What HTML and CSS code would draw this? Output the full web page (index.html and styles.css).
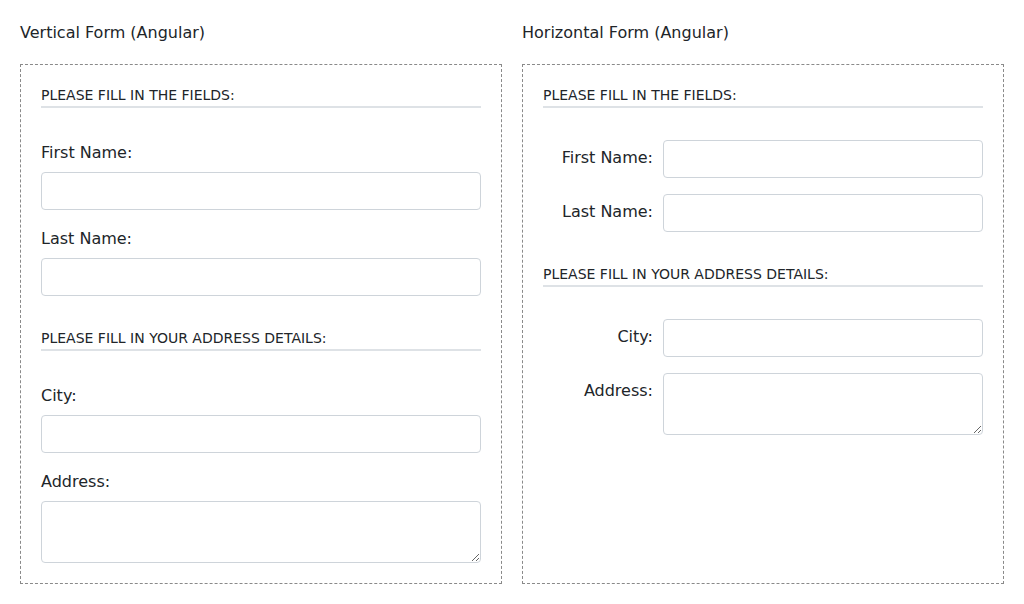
FILE: index.html
```html
<!DOCTYPE html>
<html lang="en">
<head>
<meta charset="utf-8">
<title>Forms</title>
<link rel="stylesheet" href="styles.css">
</head>
<body>
<div class="page">
  <div class="column">
    <h2 class="title">Vertical Form (Angular)</h2>
    <div class="panel">
      <div class="section">
        <div class="legend">PLEASE FILL IN THE FIELDS:</div>
        <div class="group">
          <label class="label">First Name:</label>
          <input class="control" type="text">
        </div>
        <div class="group">
          <label class="label">Last Name:</label>
          <input class="control" type="text">
        </div>
      </div>
      <div class="section">
        <div class="legend">PLEASE FILL IN YOUR ADDRESS DETAILS:</div>
        <div class="group">
          <label class="label">City:</label>
          <input class="control" type="text">
        </div>
        <div class="group">
          <label class="label">Address:</label>
          <textarea class="control area"></textarea>
        </div>
      </div>
    </div>
  </div>
  <div class="column">
    <h2 class="title">Horizontal Form (Angular)</h2>
    <div class="panel">
      <div class="section">
        <div class="legend">PLEASE FILL IN THE FIELDS:</div>
        <div class="group row">
          <label class="label hlabel">First Name:</label>
          <input class="control" type="text">
        </div>
        <div class="group row">
          <label class="label hlabel">Last Name:</label>
          <input class="control" type="text">
        </div>
      </div>
      <div class="section">
        <div class="legend">PLEASE FILL IN YOUR ADDRESS DETAILS:</div>
        <div class="group row">
          <label class="label hlabel">City:</label>
          <input class="control" type="text">
        </div>
        <div class="group row">
          <label class="label hlabel">Address:</label>
          <textarea class="control area"></textarea>
        </div>
      </div>
    </div>
  </div>
</div>
</body>
</html>
```

FILE: styles.css
```css
* { box-sizing: border-box; }
html, body { margin: 0; padding: 0; background: #fff; }
body {
  font-family: "DejaVu Sans", sans-serif;
  color: #212529;
  font-size: 16px;
  line-height: 1.5;
}
.page {
  display: grid;
  grid-template-columns: 1fr 1fr;
  column-gap: 20px;
  padding: 20px;
}
.column { display: flex; flex-direction: column; }
.title {
  margin: 0 0 19px 0;
  padding-top: 1px;
  font-size: 16px;
  font-weight: normal;
  line-height: 24px;
}
.panel {
  flex: 1;
  border: 1px dashed #8a8a8a;
  padding: 20px;
}
.section { margin-bottom: 32px; }
.section:last-child { margin-bottom: 0; }
.legend {
  font-size: 14px;
  line-height: 21px;
  border-bottom: 2px solid #dee2e6;
  margin-bottom: 32px;
}
.group { margin-bottom: 16px; display: flex; flex-direction: column; }
.section:last-child .group:last-child { margin-bottom: 0; }
.label {
  display: block;
  line-height: 24px;
  padding-top: 1px;
  margin-bottom: 7px;
}
.control {
  display: block;
  width: 100%;
  height: 38px;
  border: 1px solid #ced4da;
  border-radius: 4px;
  padding: 6px 12px;
  font: inherit;
  color: #495057;
  background: #fff;
  margin: 0;
}
.area { height: 62px; resize: vertical; }
.row { flex-direction: row; align-items: flex-start; }
.hlabel {
  flex: 0 0 110px;
  text-align: right;
  margin: 0 10px 0 0;
  padding-top: 6px;
}
.row .control { flex: 1; width: auto; }
```
